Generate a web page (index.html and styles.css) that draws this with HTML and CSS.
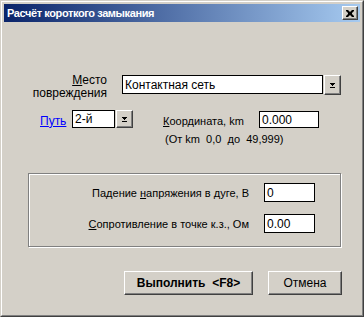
FILE: index.html
```html
<!DOCTYPE html>
<html>
<head>
<meta charset="utf-8">
<link rel="stylesheet" href="styles.css">
</head>
<body>
<div class="window">
  <div class="frame">
    <div class="titlebar">
      <span class="title">Расчёт короткого замыкания</span>
      <span class="close"><svg width="8" height="7" viewBox="0 0 8 7"><path d="M0 0h2l2 2 2-2h2v1l-2 2v1l2 2v1h-2l-2-2-2 2h-2v-1l2-2v-1l-2-2z" fill="#000"/></svg></span>
    </div>
    <div class="content">
      <div class="row1">
        <div class="lbl-place"><span class="u">М</span>есто<br>повреждения</div>
        <div class="combo-box wide">Контактная сеть</div>
        <div class="drop tall"><svg width="7" height="5" viewBox="0 0 7 5"><path d="M1 0h5v1h-1v1h-1v1h-1v-1h-1v-1h-1z M1 4h5v1h-5z" fill="#000"/></svg></div>
      </div>
      <div class="row2">
        <a class="lbl-path"><span class="u">П</span>уть</a>
        <div class="combo-box small">2-й</div>
        <div class="drop short"><svg width="7" height="5" viewBox="0 0 7 5"><path d="M1 0h5v1h-1v1h-1v1h-1v-1h-1v-1h-1z M1 4h5v1h-5z" fill="#000"/></svg></div>
        <div class="lbl-coord"><span class="u">К</span>оордината, km</div>
        <div class="field coord">0.000</div>
      </div>
      <div class="range">(От km  0,0  до  49,999)</div>
      <div class="group">
        <div class="glabel">Падение <span class="u">н</span>апряжения в дуге, В</div>
        <div class="field gfield">0</div>
        <div class="glabel"><span class="u">С</span>опротивление в точке к.з., Ом</div>
        <div class="field gfield">0.00</div>
      </div>
      <div class="buttons">
        <div class="btn run">Выполнить  &lt;F8&gt;</div>
        <div class="btn cancel">Отмена</div>
      </div>
    </div>
  </div>
</div>
</body>
</html>
```

FILE: styles.css
```css
html, body {
  margin: 0;
  padding: 0;
  background: #ffffff;
}
body {
  font-family: "Liberation Sans", Arial, sans-serif;
  font-size: 11px;
  color: #000;
}
.window {
  width: 364px;
  height: 317px;
  box-sizing: border-box;
  border: 1px solid;
  border-color: #d4d0c8 #404040 #404040 #d4d0c8;
  background: #d4d0c8;
}
.frame {
  height: 100%;
  box-sizing: border-box;
  border: 1px solid;
  border-color: #ffffff #808080 #808080 #ffffff;
  padding: 2px;
  display: flex;
  flex-direction: column;
}
.titlebar {
  height: 18px;
  flex: none;
  display: flex;
  align-items: center;
  justify-content: space-between;
  background: linear-gradient(to right, #0a246a, #a6caf0);
}
.title {
  color: #fff;
  font-weight: bold;
  font-size: 11px;
  letter-spacing: -0.4px;
  padding-left: 3px;
  white-space: nowrap;
}
.close {
  width: 16px;
  height: 14px;
  box-sizing: border-box;
  margin-right: 2px;
  background: #d4d0c8;
  border: 1px solid;
  border-color: #ffffff #404040 #404040 #ffffff;
  box-shadow: inset -1px -1px 0 #808080;
  display: flex;
  align-items: center;
  justify-content: center;
}
.close svg { display: block; }
.content {
  flex: 1;
  display: flex;
  flex-direction: column;
}
.u { text-decoration: underline; }
.row1 {
  display: flex;
  align-items: flex-start;
  margin-top: 52px;
}
.lbl-place {
  width: 103px;
  text-align: right;
  line-height: 13px;
  font-size: 12px;
}
.combo-box {
  box-sizing: border-box;
  background: #fff;
  border: 1px solid #000;
  padding-left: 2px;
  display: flex;
  align-items: center;
  white-space: nowrap;
}
.combo-box.wide {
  width: 201px;
  height: 19px;
  margin-left: 15px;
  margin-top: 1px;
  font-size: 12px;
}
.drop {
  width: 17px;
  box-sizing: border-box;
  margin-left: 1px;
  background: #d4d0c8;
  border: 1px solid;
  border-color: #ffffff #404040 #404040 #ffffff;
  box-shadow: inset -1px -1px 0 #808080;
  display: flex;
  align-items: center;
  justify-content: center;
}
.drop svg { display: block; }
.drop.tall {
  height: 20px;
  margin-top: 1px;
}
.row2 {
  display: flex;
  align-items: flex-start;
  margin-top: 10px;
  padding-left: 36px;
}
.lbl-path {
  width: 32px;
  color: #0000ff;
  text-decoration: underline;
  padding-top: 5px;
  line-height: 13px;
  font-size: 12px;
}
.combo-box.small {
  width: 43px;
  height: 18px;
  font-size: 12px;
}
.drop.short {
  height: 18px;
}
.lbl-coord {
  width: 96px;
  margin-left: 30px;
  padding-top: 5px;
  line-height: 13px;
  white-space: nowrap;
}
.field {
  box-sizing: border-box;
  background: #fff;
  border: 1px solid #000;
  padding-left: 2px;
  display: flex;
  align-items: center;
  font-size: 12px;
}
.field.coord {
  width: 60px;
  height: 17px;
  margin-top: 1px;
}
.range {
  white-space: pre;
  padding-left: 161px;
  margin-top: 5px;
  line-height: 13px;
}
.group {
  margin-top: 27px;
  margin-left: 24px;
  width: 313px;
  height: 74px;
  box-sizing: border-box;
  border: 1px solid #808080;
  box-shadow: inset 1px 1px 0 #ffffff, 1px 1px 0 #ffffff;
  display: grid;
  grid-template-columns: 220px 51px;
  column-gap: 15px;
  row-gap: 12px;
  align-items: center;
  align-content: start;
  padding-top: 9px;
}
.glabel {
  text-align: right;
  white-space: nowrap;
}
.field.gfield {
  height: 19px;
}
.buttons {
  display: flex;
  margin-top: 24px;
  padding-left: 120px;
  gap: 15px;
}
.btn {
  height: 24px;
  box-sizing: border-box;
  border: 1px solid;
  border-color: #ffffff #404040 #404040 #ffffff;
  box-shadow: inset -1px -1px 0 #808080;
  display: flex;
  align-items: center;
  justify-content: center;
  white-space: pre;
}
.btn.run {
  width: 129px;
  font-weight: bold;
  font-size: 12px;
}
.btn.cancel {
  width: 74px;
  font-size: 12px;
}
```
